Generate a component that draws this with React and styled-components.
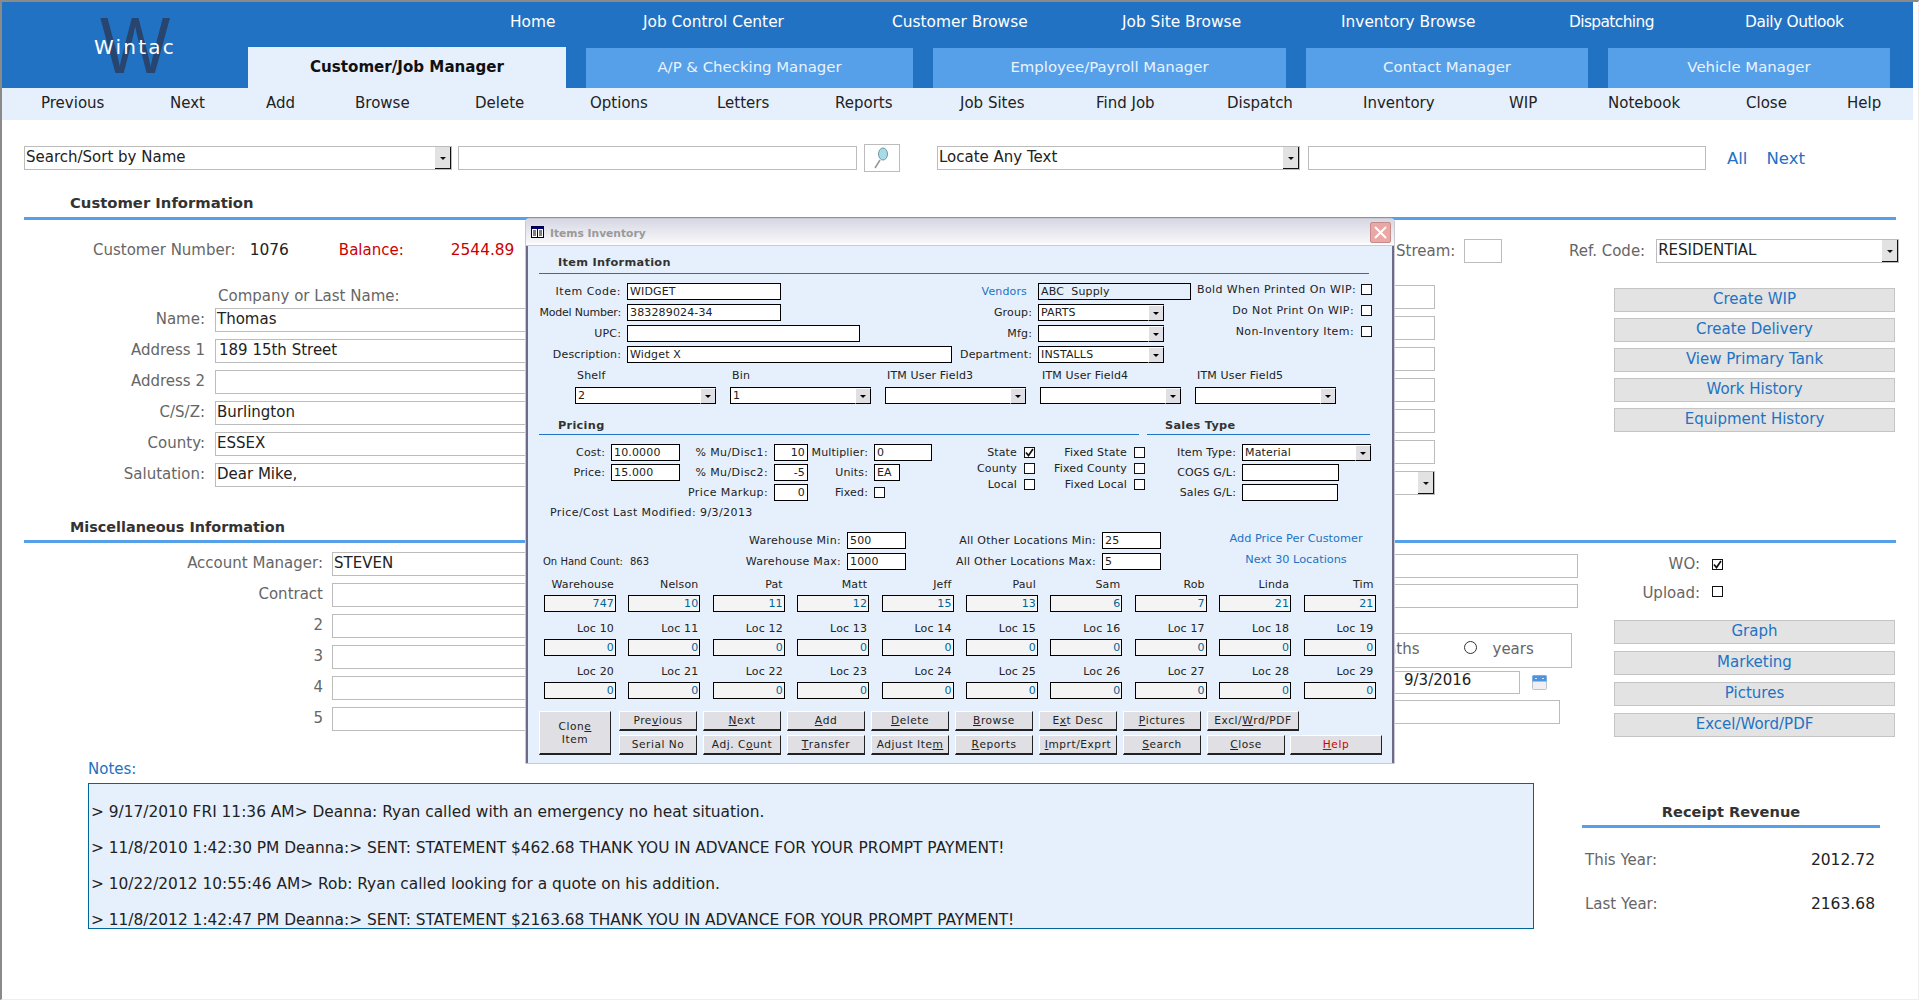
import React from "react";
import styled, { createGlobalStyle } from "styled-components";

const GlobalStyle = createGlobalStyle`
  * { box-sizing: border-box; }
  html, body { margin: 0; padding: 0; background: #fff; overflow: hidden; }
  body { font-family: "DejaVu Sans", Verdana, sans-serif; }
`;

const BLUE = "#2272c3";
const LIGHT_BLUE = "#569fe9";
const PALE = "#e6f0fd";

const Frame = styled.div`
  position: relative;
  width: 1919px;
  height: 1000px;
  border-top: 2px solid #8a8a8a;
  border-left: 2px solid #8a8a8a;
  border-right: 1px solid #eee;
  border-bottom: 1px solid #eee;
  background: #fff;
  overflow: hidden;
`;

/* header */
const Header = styled.header`
  display: flex;
  width: 1911px;
  height: 86px;
  background: ${BLUE};
`;
const Logo = styled.div`
  position: relative;
  width: 246px;
  height: 86px;
`;
const LogoW = styled.div`
  position: absolute;
  left: 98px;
  top: 4px;
  font-family: "Liberation Sans", Arial, sans-serif;
  font-size: 80px;
  line-height: 80px;
  color: #27456f;
  transform: scaleX(0.93);
  transform-origin: left center;
`;
const LogoText = styled.div`
  position: absolute;
  left: 92px;
  top: 33px;
  font-size: 20px;
  line-height: 24px;
  letter-spacing: 2.2px;
  color: #fff;
`;
const HeaderRight = styled.div`
  flex: 1;
  display: flex;
  flex-direction: column;
`;
const NavRow = styled.nav`
  display: grid;
  grid-template-columns: 133px 249px 230px 219px 228px 176px auto;
  height: 45px;
  padding: 0 0 5px 262px;
  align-items: center;
  font-size: 15.4px;
  color: #fff;
`;
const NavLink = styled.div`
  letter-spacing: ${(p) => p.$ls || 0}px;
`;
const TabRow = styled.div`
  display: flex;
  gap: 20px;
  height: 41px;
`;
const Tab = styled.div`
  display: flex;
  align-items: center;
  justify-content: center;
  width: ${(p) => p.$w}px;
  margin-top: ${(p) => (p.$active ? 0 : 1)}px;
  padding-bottom: 2px;
  background: ${(p) => (p.$active ? PALE : LIGHT_BLUE)};
  color: ${(p) => (p.$active ? "#111" : "#eaf3fd")};
  font-size: ${(p) => (p.$active ? 15.1 : 14.9)}px;
  font-weight: ${(p) => (p.$active ? 600 : 400)};
`;
const Toolbar = styled.div`
  display: grid;
  grid-template-columns: 129px 96px 89px 120px 115px 127px 118px 125px 136px 131px 136px 146px 99px 138px 101px auto;
  align-items: center;
  width: 1911px;
  height: 32px;
  padding: 0 0 2px 39px;
  background: ${PALE};
  font-size: 15px;
  color: #222;
`;

/* search */
const SearchRow = styled.div`
  display: flex;
  align-items: center;
  height: 28px;
  margin-top: 24px;
  padding-left: 22px;
`;
const Field = styled.div`
  flex: none;
  width: ${(p) => p.$w}px;
  height: ${(p) => p.$h || 24}px;
  margin-left: ${(p) => p.$ml || 0}px;
  margin-top: ${(p) => p.$mt || 0}px;
  padding-left: ${(p) => p.$pl || 1}px;
  border: 1px solid #bcbcbc;
  background: #fff;
  color: #222;
  font-size: 15px;
  line-height: ${(p) => p.$lh || 21}px;
  white-space: nowrap;
  overflow: hidden;
`;
const SelectField = styled(Field)`
  position: relative;
`;
const DropButton = styled.span`
  position: absolute;
  top: 0;
  right: 0;
  bottom: 0;
  width: 16px;
  background: #e2e2e2;
  border-right: 1px solid #111;
  border-bottom: 1px solid #111;
  &::after {
    content: "";
    position: absolute;
    left: 5px;
    top: 50%;
    margin-top: -1px;
    border: 3px solid transparent;
    border-top: 3px solid #111;
    border-bottom: 0;
  }
`;
const IconButton = styled.div`
  display: flex;
  align-items: center;
  justify-content: center;
  width: 36px;
  height: 28px;
  margin-left: 7px;
  border: 1px solid #bcbcbc;
  background: #fff;
`;
const TextLink = styled.div`
  margin-left: ${(p) => p.$ml}px;
  color: ${BLUE};
  font-size: 16.5px;
`;

/* section headings */
const SectionHead = styled.div`
  display: flex;
  align-items: flex-end;
  width: fit-content;
  height: ${(p) => p.$h}px;
  padding: 0 0 ${(p) => p.$pb}px 68px;
  color: #333;
  font-size: ${(p) => p.$size}px;
  font-weight: 600;
`;
const Rule = styled.div`
  width: 1872px;
  height: 3px;
  margin-left: 22px;
  background: ${LIGHT_BLUE};
`;

/* customer block */
const CustomerBody = styled.div`
  display: flex;
  height: 294px;
`;
const LeftCol = styled.div`
  flex: none;
  width: 998px;
`;
const SummaryRow = styled.div`
  display: flex;
  align-items: center;
  height: 20px;
  margin-top: 20px;
  padding-left: 91px;
  font-size: 15px;
  color: #666;
`;
const SummaryValue = styled.span`
  margin-left: ${(p) => p.$ml}px;
  font-size: ${(p) => p.$size || 15.4}px;
  color: ${(p) => (p.$red ? "#cc0000" : "#222")};
`;
const Caption = styled.div`
  height: 20px;
  margin-top: 26px;
  padding-left: 216px;
  margin-bottom: 2px;
  font-size: 15px;
  line-height: 20px;
  color: #666;
`;
const FormStack = styled.div`
  display: flex;
  flex-direction: column;
  gap: 7px;
  margin-top: ${(p) => p.$mt || 0}px;
`;
const FormRow = styled.div`
  display: flex;
  align-items: center;
  height: 24px;
`;
const RowLabel = styled.div`
  flex: none;
  width: ${(p) => p.$w}px;
  margin: 0 ${(p) => p.$gap}px 2px 0;
  text-align: right;
  font-size: 15px;
  color: #666;
  white-space: nowrap;
`;
const MidCol = styled.div`
  flex: none;
  width: 569px;
`;
const StreamRow = styled.div`
  display: flex;
  align-items: center;
  height: 24px;
  margin-top: 19px;
  padding-left: 396px;
  font-size: 15px;
  color: #666;
`;
const RightCol = styled.div`
  flex: none;
  width: 340px;
`;
const RefRow = styled.div`
  display: flex;
  align-items: center;
  height: 24px;
  margin-top: 19px;
  font-size: 15px;
  color: #666;
  white-space: nowrap;
`;
const ActionStack = styled.div`
  display: flex;
  flex-direction: column;
  gap: ${(p) => p.$gap}px;
  margin: ${(p) => p.$mt}px 0 0 ${(p) => p.$ml}px;
`;
const ActionButton = styled.div`
  width: 281px;
  height: 24px;
  border: 1px solid #c4c4c4;
  background: #e3e3e3;
  color: ${BLUE};
  font-size: 15px;
  line-height: 20px;
  text-align: center;
`;

/* misc block */
const MiscBody = styled.div`
  display: flex;
  height: 215px;
`;
const MiscMid = styled.div`
  flex: none;
  width: 590px;
  padding-top: 11px;
`;
const PeriodBox = styled.div`
  display: flex;
  align-items: center;
  width: 572px;
  height: 35px;
  margin-top: 25px;
  padding: 0 0 4px 362px;
  border: 1px solid #bcbcbc;
  font-size: 15px;
  color: #666;
`;
const Radio = styled.span`
  width: 13px;
  height: 13px;
  margin: 0 16px 2px 44px;
  border: 1.5px solid #333;
  border-radius: 50%;
`;
const DateRow = styled.div`
  display: flex;
  align-items: center;
  height: 23px;
  margin-top: 3px;
`;
const MiscSide = styled.div`
  flex: none;
  width: 310px;
  padding-top: 12px;
`;
const CheckRow = styled.div`
  display: flex;
  align-items: center;
  height: 20px;
  margin-bottom: 9px;
  padding-left: 12px;
  font-size: 15px;
  color: #666;
`;
const CheckBox = styled.span`
  flex: none;
  display: inline-flex;
  align-items: center;
  justify-content: center;
  width: 11px;
  height: 11px;
  margin-bottom: ${(p) => p.$mb || 0}px;
  border: 1px solid #111;
  background: ${(p) => (p.$bg ? p.$bg : "transparent")};
`;

/* notes */
const BottomRow = styled.div`
  display: flex;
  padding-left: 86px;
`;
const NotesCol = styled.div`
  flex: none;
  width: 1446px;
`;
const NotesLabel = styled.div`
  height: 25px;
  padding-top: 2px;
  color: ${BLUE};
  font-size: 15px;
`;
const NotesBox = styled.div`
  height: 146px;
  padding: 10px 0 0 2px;
  border: 1px solid #006699;
  background: ${PALE};
  overflow: hidden;
`;
const NoteLine = styled.div`
  height: 36px;
  font-size: 15.4px;
  line-height: 36px;
  color: #222;
  white-space: nowrap;
`;
const Revenue = styled.div`
  flex: none;
  width: 298px;
  margin-left: 48px;
  padding-top: 44px;
`;
const RevenueTitle = styled.div`
  height: 23px;
  text-align: center;
  font-size: 14.6px;
  font-weight: 600;
  color: #333;
  line-height: 20px;
`;
const RevenueRule = styled.div`
  height: 3px;
  background: ${LIGHT_BLUE};
`;
const RevenueRow = styled.div`
  display: flex;
  justify-content: space-between;
  height: ${(p) => (p.$first ? 66 : 44)}px;
  padding: ${(p) => (p.$first ? "22px 5px 0 3px" : "0 5px 0 3px")};
  font-size: 15px;
  line-height: 20px;
  color: #666;
  & > b {
    font-weight: 400;
    font-size: 15.5px;
    color: #222;
  }
`;

/* inventory window */
const Modal = styled.section`
  position: absolute;
  left: 523px;
  top: 216px;
  width: 870px;
  height: 546px;
  border: 1px solid #c9c9d6;
  border-radius: 4px 4px 0 0;
  background: ${PALE};
  color: #222;
  font-size: 11px;
  letter-spacing: 0.15px;
  box-shadow: inset 2px 0 0 #6c6c8a, inset -2px 0 0 #6c6c8a;
`;
const TitleBar = styled.div`
  position: relative;
  display: flex;
  align-items: center;
  gap: 6px;
  height: 27px;
  padding-left: 5px;
  border-bottom: 1px solid #c9c9d6;
  background: linear-gradient(#d7d7e3, #f4f4f8 85%, #fff);
  color: #9a9a9a;
  font-size: 10.7px;
  font-weight: 700;
  letter-spacing: 0;
`;
const TitleText = styled.span`
  padding-top: 2px;
`;
const CloseBox = styled.div`
  position: absolute;
  top: 3px;
  right: 3px;
  width: 21px;
  height: 21px;
  display: flex;
  align-items: center;
  justify-content: center;
  border: 1px solid #c98a8a;
  border-radius: 2px;
  background: #e9a8a6;
`;
const ModalBody = styled.div`
  padding-left: 13px;
`;
const ModalHead = styled.div`
  width: ${(p) => p.$w}px;
  height: ${(p) => p.$h}px;
  padding: ${(p) => p.$top}px 0 0 ${(p) => p.$pl}px;
  border-bottom: 1px solid ${BLUE};
  color: #333;
  font-size: 11.3px;
  font-weight: 700;
  letter-spacing: 0.3px;
  line-height: 14px;
`;
const ItemGrid = styled.div`
  display: flex;
  padding-top: 7px;
`;
const MiniStack = styled.div`
  flex: none;
  display: flex;
  flex-direction: column;
  gap: ${(p) => p.$gap ?? 4}px;
  width: ${(p) => p.$w}px;
  margin-left: ${(p) => p.$ml || 0}px;
  padding-top: ${(p) => p.$pt || 0}px;
`;
const MiniRow = styled.div`
  display: flex;
  align-items: center;
  gap: ${(p) => p.$gap ?? 6}px;
  height: ${(p) => p.$h || 17}px;
`;
const MiniLabel = styled.div`
  flex: none;
  width: ${(p) => p.$w}px;
  padding-right: ${(p) => p.$pr || 0}px;
  text-align: right;
  white-space: nowrap;
  letter-spacing: ${(p) => p.$ls ?? "inherit"};
  color: ${(p) => (p.$link ? BLUE : "#222")};
`;
const MiniField = styled.div`
  position: relative;
  flex: none;
  width: ${(p) => p.$w}px;
  height: 17px;
  padding: 0 2px;
  border: 1px solid #000;
  background: ${(p) => p.$bg || "#fff"};
  color: #222;
  font-size: 11px;
  line-height: 15px;
  text-align: ${(p) => (p.$right ? "right" : "left")};
  white-space: pre;
`;
const MiniDrop = styled.span`
  position: absolute;
  top: 0;
  right: -1px;
  bottom: -1px;
  width: 16px;
  background: #dfdfe4;
  border-top: 1px solid #fff;
  border-left: 1px solid #fff;
  border-right: 1px solid #000;
  border-bottom: 1px solid #000;
  &::after {
    content: "";
    position: absolute;
    left: 4px;
    top: 6px;
    border: 3px solid transparent;
    border-top: 3px solid #000;
    border-bottom: 0;
  }
`;
const UserFields = styled.div`
  display: grid;
  grid-template-columns: repeat(5, 141px);
  column-gap: 14px;
  margin: 6px 0 0 36px;
`;
const UserLabel = styled.div`
  height: 14px;
  margin-bottom: 4px;
  padding-left: 2px;
  line-height: 14px;
`;
const HeadRow = styled.div`
  display: flex;
  gap: 8px;
`;
const PricingBody = styled.div`
  display: flex;
  padding-top: 9px;
`;
const ModifiedRow = styled.div`
  height: 14px;
  margin-top: 5px;
  padding-left: 11px;
  line-height: 14px;
  letter-spacing: 0.42px;
`;
const StockRow = styled.div`
  display: flex;
  margin-top: 12px;
`;
const OnHand = styled.div`
  flex: none;
  display: flex;
  gap: 7px;
  width: 121px;
  padding: 23px 0 0 4px;
  font-size: 10px;
  line-height: 14px;
  letter-spacing: 0;
`;
const LinkStack = styled.div`
  flex: none;
  width: 136px;
  height: 38px;
  margin-left: 68px;
  text-align: center;
  color: ${BLUE};
  line-height: 14px;
  & > div {
    display: flex;
    justify-content: center;
    height: 21px;
    white-space: nowrap;
    font-size: 11.3px;
    letter-spacing: 0;
  }
`;
const CountGrid = styled.div`
  display: grid;
  grid-template-columns: repeat(10, 72px);
  column-gap: 12.4px;
  row-gap: 9.5px;
  margin: 8px 0 0 5px;
`;
const CountCell = styled.div`
  height: 34px;
`;
const CountLabel = styled.div`
  height: 13px;
  margin-bottom: 4px;
  padding-right: 2px;
  text-align: right;
  line-height: 13px;
`;
const CountValue = styled(MiniField)`
  width: 72px;
  background: #f4f4f4;
  color: #006699;
  text-align: right;
  padding-right: 1px;
`;
const ButtonArea = styled.div`
  display: flex;
  gap: 8px;
  margin-top: 12px;
`;
const ButtonStack = styled.div`
  display: flex;
  flex-direction: column;
  gap: 4px;
`;
const ButtonRow = styled.div`
  display: flex;
  gap: 6px;
`;
const WinButton = styled.div`
  display: flex;
  align-items: center;
  justify-content: center;
  text-align: center;
  width: ${(p) => p.$w || 78}px;
  height: ${(p) => p.$h || 20}px;
  margin-left: ${(p) => p.$ml || 0}px;
  border-top: 1px solid #fff;
  border-left: 1px solid #fff;
  border-right: 1px solid #222;
  border-bottom: 2px solid #222;
  background: #dfdfe4;
  color: ${(p) => (p.$red ? "#cc0000" : "#222")};
  font-size: 10.6px;
  letter-spacing: 0.55px;
  line-height: 13px;
  white-space: nowrap;
  & u {
    text-decoration-thickness: 1px;
  }
`;

const navLinks = [["Home"], ["Job Control Center"], ["Customer Browse"], ["Job Site Browse"], ["Inventory Browse"], ["Dispatching", -0.6], ["Daily Outlook", -0.4]];
const tabs = [
  ["Customer/Job Manager", 318, true],
  ["A/P & Checking Manager", 327],
  ["Employee/Payroll Manager", 353],
  ["Contact Manager", 282],
  ["Vehicle Manager", 282],
];
const toolbarItems = ["Previous", "Next", "Add", "Browse", "Delete", "Options", "Letters", "Reports", "Job Sites", "Find Job", "Dispatch", "Inventory", "WIP", "Notebook", "Close", "Help"];
const addressRows = [
  ["Name:", "Thomas", 1],
  ["Address 1", "189 15th Street", 3],
  ["Address 2", "", 1],
  ["C/S/Z:", "Burlington", 1],
  ["County:", "ESSEX", 1],
  ["Salutation:", "Dear Mike,", 1],
];
const miscRows = [["Account Manager:", "STEVEN"], ["Contract", ""], ["2", ""], ["3", ""], ["4", ""], ["5", ""]];
const notes = [
  "> 9/17/2010 FRI 11:36 AM> Deanna: Ryan called with an emergency no heat situation.",
  "> 11/8/2010 1:42:30 PM Deanna:> SENT: STATEMENT $462.68 THANK YOU IN ADVANCE FOR YOUR PROMPT PAYMENT!",
  "> 10/22/2012 10:55:46 AM> Rob: Ryan called looking for a quote on his addition.",
  "> 11/8/2012 1:42:47 PM Deanna:> SENT: STATEMENT $2163.68 THANK YOU IN ADVANCE FOR YOUR PROMPT PAYMENT!",
];
const counts = [
  ["Warehouse", 747], ["Nelson", 10], ["Pat", 11], ["Matt", 12], ["Jeff", 15], ["Paul", 13], ["Sam", 6], ["Rob", 7], ["Linda", 21], ["Tim", 21],
  ...[10, 11, 12, 13, 14, 15, 16, 17, 18, 19, 20, 21, 22, 23, 24, 25, 26, 27, 28, 29].map((n) => [`Loc ${n}`, 0]),
];

const Magnifier = () => (
  <svg width="18" height="24" viewBox="0 0 18 24">
    <path d="M7 14 L2 22" stroke="#9a9a9a" strokeWidth="1.6" />
    <ellipse cx="10" cy="8" rx="4.5" ry="6" fill="#a9dbe6" stroke="#6a9aa8" strokeWidth="1" />
  </svg>
);
const CalendarIcon = () => (
  <svg width="15" height="15" viewBox="0 0 15 15" style={{ marginLeft: 12 }}>
    <rect x="0.5" y="0.5" width="14" height="14" rx="1" fill="#f0f0f2" stroke="#b8c4d2" />
    <rect x="0.5" y="0.5" width="14" height="6" fill="#4d94de" />
    <path d="M3 3.5h2M10 3.5h2" stroke="#d9e8f8" strokeWidth="1" />
  </svg>
);
const WindowIcon = () => (
  <svg width="13" height="12" viewBox="0 0 13 12">
    <rect x="0.5" y="0.5" width="12" height="11" fill="#fff" stroke="#000" />
    <rect x="0.5" y="0.5" width="12" height="2.5" fill="#000080" />
    <path d="M2 5h3M2 7h3M2 9h3M8 5h3M8 7h3M8 9h3M6.5 3v8" stroke="#000" strokeWidth="1" />
  </svg>
);
const CheckMark = () => (
  <svg width="9" height="9" viewBox="0 0 9 9">
    <path d="M1 4.5 L3.5 7.5 L8 1" fill="none" stroke="#111" strokeWidth="1.7" />
  </svg>
);
const CloseGlyph = () => (
  <svg width="13" height="13" viewBox="0 0 13 13">
    <path d="M1 1 L12 12 M12 1 L1 12" stroke="#fff" strokeWidth="2" />
  </svg>
);

function Mini({ label, labelW, w, value, right, bg, drop, link, pr, ls }) {
  return (
    <MiniRow>
      <MiniLabel $w={labelW} $link={link} $pr={pr} $ls={ls}>{label}</MiniLabel>
      <MiniField $w={w} $right={right} $bg={bg}>
        {value}
        {drop && <MiniDrop />}
      </MiniField>
    </MiniRow>
  );
}

function Check({ label, labelW, checked, gap = 7, h = 16, ls }) {
  return (
    <MiniRow $gap={gap} $h={h}>
      <MiniLabel $w={labelW} $ls={ls}>{label}</MiniLabel>
      <CheckBox $bg="#fff">{checked && <CheckMark />}</CheckBox>
    </MiniRow>
  );
}

function ItemsWindow() {
  return (
    <Modal>
      <TitleBar>
        <WindowIcon />
        <TitleText>Items Inventory</TitleText>
        <CloseBox>
          <CloseGlyph />
        </CloseBox>
      </TitleBar>
      <ModalBody>
        <ModalHead $w={830} $h={28} $top={10} $pl={19}>Item Information</ModalHead>
        <ItemGrid>
          <MiniStack $w={421} $pt={2}>
            <Mini label="Item Code:" labelW={82} w={154} value="WIDGET" ls="0.5px" />
            <Mini label="Model Number:" labelW={82} w={154} value="383289024-34" ls="-0.2px" />
            <Mini label="UPC:" labelW={82} w={233} />
            <Mini label="Description:" labelW={82} w={325} value="Widget X" />
          </MiniStack>
          <MiniStack $w={231} $pt={2}>
            <Mini label="Vendors" labelW={72} pr={5} w={153} value="ABC  Supply" bg="transparent" link />
            <Mini label="Group:" labelW={72} w={126} value="PARTS" drop />
            <Mini label="Mfg:" labelW={72} w={126} drop />
            <Mini label="Department:" labelW={72} w={126} value="INSTALLS" drop />
          </MiniStack>
          <MiniStack $w={175} $ml={6} $gap={5}>
            <Check label="Bold When Printed On WIP:" labelW={157} h={16} ls="0.4px" />
            <Check label="Do Not Print On WIP:" labelW={157} h={16} ls="0.4px" />
            <Check label="Non-Inventory Item:" labelW={157} h={16} ls="0.4px" />
          </MiniStack>
        </ItemGrid>
        <UserFields>
          {[["Shelf", "2"], ["Bin", "1"], ["ITM User Field3", ""], ["ITM User Field4", ""], ["ITM User Field5", ""]].map(([label, value]) => (
            <div key={label}>
              <UserLabel>{label}</UserLabel>
              <MiniField $w={141}>
                {value}
                <MiniDrop />
              </MiniField>
            </div>
          ))}
        </UserFields>
        <HeadRow>
          <ModalHead $w={600} $h={31} $top={15} $pl={19}>Pricing</ModalHead>
          <ModalHead $w={223} $h={31} $top={15} $pl={18}>Sales Type</ModalHead>
        </HeadRow>
        <PricingBody>
          <MiniStack $w={141} $gap={3}>
            <Mini label="Cost:" labelW={66} w={69} value="10.0000" />
            <Mini label="Price:" labelW={66} w={69} value="15.000" />
          </MiniStack>
          <MiniStack $w={128} $gap={3}>
            <Mini label="% Mu/Disc1:" labelW={88} w={34} value="10" right ls="0.4px" />
            <Mini label="% Mu/Disc2:" labelW={88} w={34} value="-5" right ls="0.4px" />
            <Mini label="Price Markup:" labelW={88} w={34} value="0" right ls="0.4px" />
          </MiniStack>
          <MiniStack $w={124} $gap={3}>
            <Mini label="Multiplier:" labelW={60} w={58} value="0" />
            <Mini label="Units:" labelW={60} w={26} value="EA" />
            <MiniRow>
              <MiniLabel $w={60}>Fixed:</MiniLabel>
              <CheckBox $bg="#fff" />
            </MiniRow>
          </MiniStack>
          <MiniStack $w={103} $gap={0}>
            <Check label="State" labelW={85} checked />
            <Check label="County" labelW={85} />
            <Check label="Local" labelW={85} />
          </MiniStack>
          <MiniStack $w={110} $gap={0}>
            <Check label="Fixed State" labelW={92} />
            <Check label="Fixed County" labelW={92} />
            <Check label="Fixed Local" labelW={92} />
          </MiniStack>
          <MiniStack $w={226} $gap={3}>
            <Mini label="Item Type:" labelW={91} w={129} value="Material" drop />
            <Mini label="COGS G/L:" labelW={91} w={97} />
            <Mini label="Sales G/L:" labelW={91} w={96} />
          </MiniStack>
        </PricingBody>
        <ModifiedRow>Price/Cost Last Modified: 9/3/2013</ModifiedRow>
        <StockRow>
          <OnHand>
            <span>On Hand Count:</span>
            <span>863</span>
          </OnHand>
          <MiniStack $w={246}>
            <Mini label="Warehouse Min:" labelW={181} w={59} value="500" ls="0.3px" />
            <Mini label="Warehouse Max:" labelW={181} w={59} value="1000" ls="0.3px" />
          </MiniStack>
          <MiniStack $w={254}>
            <Mini label="All Other Locations Min:" labelW={190} w={59} value="25" ls="0.25px" />
            <Mini label="All Other Locations Max:" labelW={190} w={59} value="5" ls="0.25px" />
          </MiniStack>
          <LinkStack>
            <div>Add Price Per Customer</div>
            <div>Next 30 Locations</div>
          </LinkStack>
        </StockRow>
        <CountGrid>
          {counts.map(([label, value]) => (
            <CountCell key={label}>
              <CountLabel>{label}</CountLabel>
              <CountValue>{value}</CountValue>
            </CountCell>
          ))}
        </CountGrid>
        <ButtonArea>
          <WinButton $w={72} $h={44}>
            <span>
              Clon<u>e</u>
              <br />
              Item
            </span>
          </WinButton>
          <ButtonStack>
            <ButtonRow>
              <WinButton>Pre<u>v</u>ious</WinButton>
              <WinButton><u>N</u>ext</WinButton>
              <WinButton><u>A</u>dd</WinButton>
              <WinButton><u>D</u>elete</WinButton>
              <WinButton><u>B</u>rowse</WinButton>
              <WinButton>E<u>x</u>t Desc</WinButton>
              <WinButton><u>P</u>ictures</WinButton>
              <WinButton $w={92}>Excl/<u>W</u>rd/PDF</WinButton>
            </ButtonRow>
            <ButtonRow>
              <WinButton>Serial No</WinButton>
              <WinButton>Adj. C<u>o</u>unt</WinButton>
              <WinButton><u>T</u>ransfer</WinButton>
              <WinButton>Adjust Ite<u>m</u></WinButton>
              <WinButton><u>R</u>eports</WinButton>
              <WinButton><u>I</u>mprt/Exprt</WinButton>
              <WinButton><u>S</u>earch</WinButton>
              <WinButton><u>C</u>lose</WinButton>
              <WinButton $w={92} $ml={-1} $red><u>H</u>elp</WinButton>
            </ButtonRow>
          </ButtonStack>
        </ButtonArea>
      </ModalBody>
    </Modal>
  );
}

export default function App() {
  return (
    <>
      <GlobalStyle />
      <Frame>
        <Header>
          <Logo>
            <LogoW>W</LogoW>
            <LogoText>Wintac</LogoText>
          </Logo>
          <HeaderRight>
            <NavRow>
              {navLinks.map(([link, ls]) => (
                <NavLink key={link} $ls={ls}>{link}</NavLink>
              ))}
            </NavRow>
            <TabRow>
              {tabs.map(([label, w, active]) => (
                <Tab key={label} $w={w} $active={active}>{label}</Tab>
              ))}
            </TabRow>
          </HeaderRight>
        </Header>
        <Toolbar>
          {toolbarItems.map((item) => (
            <div key={item}>{item}</div>
          ))}
        </Toolbar>

        <SearchRow>
          <SelectField $w={428}>
            Search/Sort by Name
            <DropButton />
          </SelectField>
          <Field $w={399} $ml={6} />
          <IconButton>
            <Magnifier />
          </IconButton>
          <SelectField $w={363} $ml={37}>
            Locate Any Text
            <DropButton />
          </SelectField>
          <Field $w={398} $ml={8} />
          <TextLink $ml={21}>All</TextLink>
          <TextLink $ml={19}>Next</TextLink>
        </SearchRow>

        <SectionHead $h={45} $pb={6} $size={14.8}>Customer Information</SectionHead>
        <Rule />
        <CustomerBody>
          <LeftCol>
            <SummaryRow>
              Customer Number:
              <SummaryValue $ml={14}>1076</SummaryValue>
              <SummaryValue $ml={50} $size={15} $red>Balance:</SummaryValue>
              <SummaryValue $ml={47} $red>2544.89</SummaryValue>
            </SummaryRow>
            <Caption>Company or Last Name:</Caption>
            <FormStack>
              {addressRows.map(([label, value, pl]) => (
                <FormRow key={label}>
                  <RowLabel $w={203} $gap={10}>{label}</RowLabel>
                  <Field $w={785} $pl={pl}>{value}</Field>
                </FormRow>
              ))}
            </FormStack>
          </LeftCol>
          <MidCol>
            <StreamRow>
              Stream:
              <Field $w={38} $ml={9} />
            </StreamRow>
            <FormStack $mt={22}>
              {[0, 1, 2, 3, 4, 5].map((n) => (
                <Field key={n} $w={435} />
              ))}
              <SelectField $w={435}>
                <DropButton />
              </SelectField>
            </FormStack>
          </MidCol>
          <RightCol>
            <RefRow>
              Ref. Code:
              <SelectField $w={243} $ml={11}>
                RESIDENTIAL
                <DropButton />
              </SelectField>
            </RefRow>
            <ActionStack $gap={6} $mt={25} $ml={45}>
              {["Create WIP", "Create Delivery", "View Primary Tank", "Work History", "Equipment History"].map((b) => (
                <ActionButton key={b}>{b}</ActionButton>
              ))}
            </ActionStack>
          </RightCol>
        </CustomerBody>

        <SectionHead $h={26} $pb={5} $size={14.4}>Miscellaneous Information</SectionHead>
        <Rule />
        <MiscBody>
          <LeftCol>
            <FormStack $mt={9}>
              {miscRows.map(([label, value]) => (
                <FormRow key={label}>
                  <RowLabel $w={321} $gap={9}>{label}</RowLabel>
                  <Field $w={668}>{value}</Field>
                </FormRow>
              ))}
            </FormStack>
          </LeftCol>
          <MiscMid>
            <Field $w={578} />
            <Field $w={578} $mt={6} />
            <PeriodBox>
              months
              <Radio />
              years
            </PeriodBox>
            <DateRow>
              <Field $w={520} $h={23} $pl={403} $lh={16}>9/3/2016</Field>
              <CalendarIcon />
            </DateRow>
            <Field $w={560} $mt={6} />
          </MiscMid>
          <MiscSide>
            <CheckRow>
              <RowLabel $w={98} $gap={12}>WO:</RowLabel>
              <CheckBox $mb={2}>
                <CheckMark />
              </CheckBox>
            </CheckRow>
            <CheckRow>
              <RowLabel $w={98} $gap={12}>Upload:</RowLabel>
              <CheckBox $mb={6} />
            </CheckRow>
            <ActionStack $gap={7} $mt={16} $ml={24}>
              {["Graph", "Marketing", "Pictures", "Excel/Word/PDF"].map((b) => (
                <ActionButton key={b}>{b}</ActionButton>
              ))}
            </ActionStack>
          </MiscSide>
        </MiscBody>

        <BottomRow>
          <NotesCol>
            <NotesLabel>Notes:</NotesLabel>
            <NotesBox>
              {notes.map((n) => (
                <NoteLine key={n}>{n}</NoteLine>
              ))}
            </NotesBox>
          </NotesCol>
          <Revenue>
            <RevenueTitle>Receipt Revenue</RevenueTitle>
            <RevenueRule />
            <RevenueRow $first>
              <span>This Year:</span>
              <b>2012.72</b>
            </RevenueRow>
            <RevenueRow>
              <span>Last Year:</span>
              <b>2163.68</b>
            </RevenueRow>
          </Revenue>
        </BottomRow>

        <ItemsWindow />
      </Frame>
    </>
  );
}
